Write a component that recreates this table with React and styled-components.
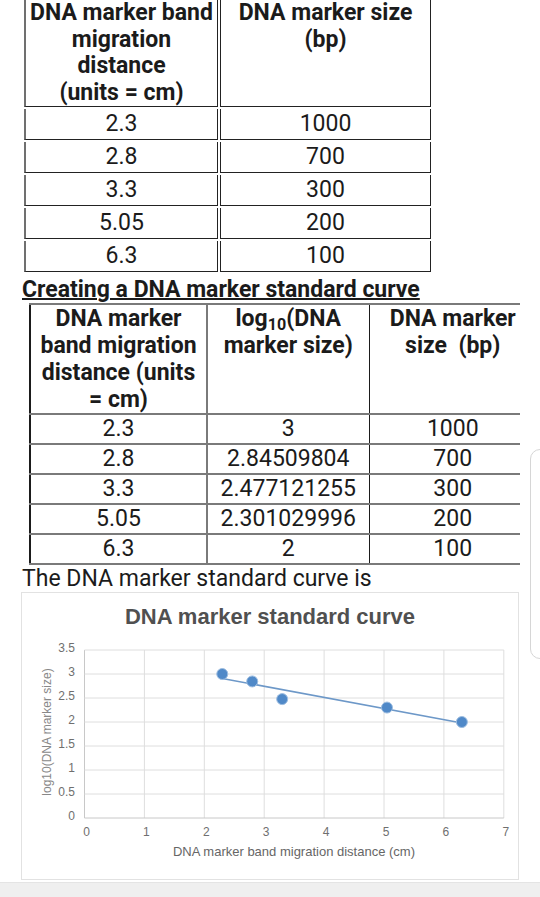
import React from 'react';
import styled, { createGlobalStyle } from 'styled-components';

const GlobalStyle = createGlobalStyle`
  html, body { margin: 0; padding: 0; background: #fff; }
  body { font-family: Roboto, "Noto Sans", sans-serif; color: #1b1b1b; overflow: hidden; }
`;

const Page = styled.div`
  position: relative;
  width: 540px;
  height: 897px;
  overflow: hidden;
  display: flex;
  flex-direction: column;
  background: #fff;
`;

/* ---------- first table ---------- */
const MarkerTable = styled.table`
  border-collapse: separate;
  border-spacing: 2px 2px;
  margin: -2px 0 0 22px;
  table-layout: fixed;
  width: 411px;
  font-size: 23px;
  color: #1b1b1b;
`;

const MCell = styled.td`
  box-sizing: border-box;
  width: ${p => (p.$first ? 194 : 211)}px;
  padding: 0 2px;
  text-align: center;
  vertical-align: top;
  font-weight: ${p => (p.$head ? 700 : 400)};
  line-height: ${p => (p.$head ? '26.5px' : '30px')};
  border-left: ${p => (p.$first ? '2px solid #707070' : '1px solid #222')};
  border-right: 1px solid #222;
  border-bottom: 1px solid #222;
`;

const SectionTitle = styled.h2`
  margin: 2px 0 0 22px;
  font-size: 23px;
  font-weight: 700;
  line-height: 27px;
  text-decoration: underline;
  text-decoration-thickness: 2px;
  color: #1b1b1b;
`;

/* ---------- second table ---------- */
const CurveWrap = styled.div`
  margin-left: 29px;
  width: 491px;
  overflow: hidden;
`;

const CurveTable = styled.table`
  border-collapse: collapse;
  table-layout: fixed;
  width: 506px;
  font-size: 23px;
  border-top: 2px solid #7a7a7a;
  border-left: 2px solid #1b1b1b;
`;

const CCell = styled.td`
  padding: 0;
  text-align: center;
  vertical-align: top;
  white-space: nowrap;
  font-weight: ${p => (p.$head ? 700 : 400)};
  line-height: 27px;
  height: ${p => (p.$head ? '107px' : '28px')};
  border-bottom: 2px solid #7a7a7a;
  border-right: ${p => p.$right || 'none'};
`;

const Sub = styled.sub`
  font-size: 0.7em;
  line-height: 0;
  vertical-align: -0.26em;
`;

const Para = styled.p`
  margin: 0 0 0 22px;
  font-size: 23px;
  line-height: 27px;
  color: #1b1b1b;
`;

/* ---------- chart ---------- */
const Figure = styled.div`
  margin-left: 21px;
  width: 498px;
  height: 288px;
  box-sizing: border-box;
  border: 1px solid #e2e2e2;
  background: #fff;
`;

const ChartSvg = styled.svg`
  display: block;
  font-family: "Liberation Sans", Arial, sans-serif;
`;

const ScrollThumb = styled.div`
  position: absolute;
  left: 530px;
  top: 449px;
  width: 24px;
  height: 210px;
  box-sizing: border-box;
  border: 1px solid #d6d6d6;
  border-radius: 10px;
  background: #fff;
`;

const BottomBar = styled.div`
  margin-top: auto;
  height: 14px;
  background: #efefef;
  border-top: 1px solid #e4e4e4;
`;

const rows1 = [
  ['2.3', '1000'],
  ['2.8', '700'],
  ['3.3', '300'],
  ['5.05', '200'],
  ['6.3', '100'],
];

const rows2 = [
  ['2.3', '3', '1000'],
  ['2.8', '2.84509804', '700'],
  ['3.3', '2.477121255', '300'],
  ['5.05', '2.301029996', '200'],
  ['6.3', '2', '100'],
];

const pts = [
  [2.3, 3],
  [2.8, 2.84509804],
  [3.3, 2.477121255],
  [5.05, 2.301029996],
  [6.3, 2],
];

const X0 = 62.5;
const UX = 59.9;
const Y0 = 225;
const UY = 48;
const sx = v => X0 + UX * v;
const sy = v => Y0 - UY * v;

function Chart() {
  const xs = [0, 1, 2, 3, 4, 5, 6, 7];
  const ys = [0, 0.5, 1, 1.5, 2, 2.5, 3, 3.5];
  const slope = -0.23222;
  const icpt = 3.44185;
  return (
    <ChartSvg width="496" height="286" viewBox="0 0 496 286">
      <text x="248" y="31" textAnchor="middle" fontSize="22" fontWeight="700" fill="#505050">
        DNA marker standard curve
      </text>
      {xs.map(v => (
        <line key={'gx' + v} x1={sx(v)} x2={sx(v)} y1={sy(3.5)} y2={sy(0)} stroke={v === 0 ? '#c8c8c8' : '#dedede'} strokeWidth="1" />
      ))}
      {ys.map(v => (
        <line key={'gy' + v} x1={sx(0)} x2={sx(7)} y1={sy(v)} y2={sy(v)} stroke={v === 0 ? '#c8c8c8' : '#dedede'} strokeWidth="1" />
      ))}
      {ys.map(v => (
        <text key={'ly' + v} x="53" y={sy(v) + 2} textAnchor="end" fontSize="12" fill="#6f6f6f">
          {String(v)}
        </text>
      ))}
      {xs.map(v => (
        <text key={'lx' + v} x={sx(v) + 2} y="243" textAnchor="middle" fontSize="12" fill="#6f6f6f">
          {String(v)}
        </text>
      ))}
      <text x="272" y="263" textAnchor="middle" fontSize="13" fill="#666">
        DNA marker band migration distance (cm)
      </text>
      <text transform="translate(29 139) rotate(-90)" textAnchor="middle" fontSize="12" fill="#888">
        log10(DNA marker size)
      </text>
      <line
        x1={sx(2.3)}
        y1={sy(icpt + slope * 2.3)}
        x2={sx(6.3)}
        y2={sy(icpt + slope * 6.3)}
        stroke="#6d98c8"
        strokeWidth="1.6"
      />
      {pts.map(([x, y]) => (
        <circle key={x} cx={sx(x)} cy={sy(y)} r="5.5" fill="#5089c8" stroke="#9dbde0" strokeWidth="1" />
      ))}
    </ChartSvg>
  );
}

export default function App() {
  return (
    <Page>
      <GlobalStyle />
      <MarkerTable>
        <tbody>
          <tr>
            <MCell $head $first>
              DNA marker band<br />migration<br />distance<br />(units = cm)
            </MCell>
            <MCell $head>
              DNA marker size<br />(bp)
            </MCell>
          </tr>
          {rows1.map(r => (
            <tr key={r[0]}>
              <MCell $first>{r[0]}</MCell>
              <MCell>{r[1]}</MCell>
            </tr>
          ))}
        </tbody>
      </MarkerTable>

      <SectionTitle>Creating a DNA marker standard curve</SectionTitle>

      <CurveWrap>
        <CurveTable>
          <colgroup>
            <col style={{ width: 177 }} />
            <col style={{ width: 162 }} />
            <col style={{ width: 167 }} />
          </colgroup>
          <tbody>
            <tr>
              <CCell $head $right="2px solid #7a7a7a">
                DNA marker<br />band migration<br />distance (units<br />= cm)
              </CCell>
              <CCell $head $right="1px solid #1b1b1b">
                log<Sub>10</Sub>(DNA<br />marker size)
              </CCell>
              <CCell $head>
                DNA marker<br />size{'\u00a0'} (bp)
              </CCell>
            </tr>
            {rows2.map(r => (
              <tr key={r[0]}>
                <CCell $right="2px solid #7a7a7a">{r[0]}</CCell>
                <CCell $right="1px solid #1b1b1b">{r[1]}</CCell>
                <CCell>{r[2]}</CCell>
              </tr>
            ))}
          </tbody>
        </CurveTable>
      </CurveWrap>

      <Para>The DNA marker standard curve is</Para>

      <Figure>
        <Chart />
      </Figure>

      <BottomBar />
      <ScrollThumb />
    </Page>
  );
}
